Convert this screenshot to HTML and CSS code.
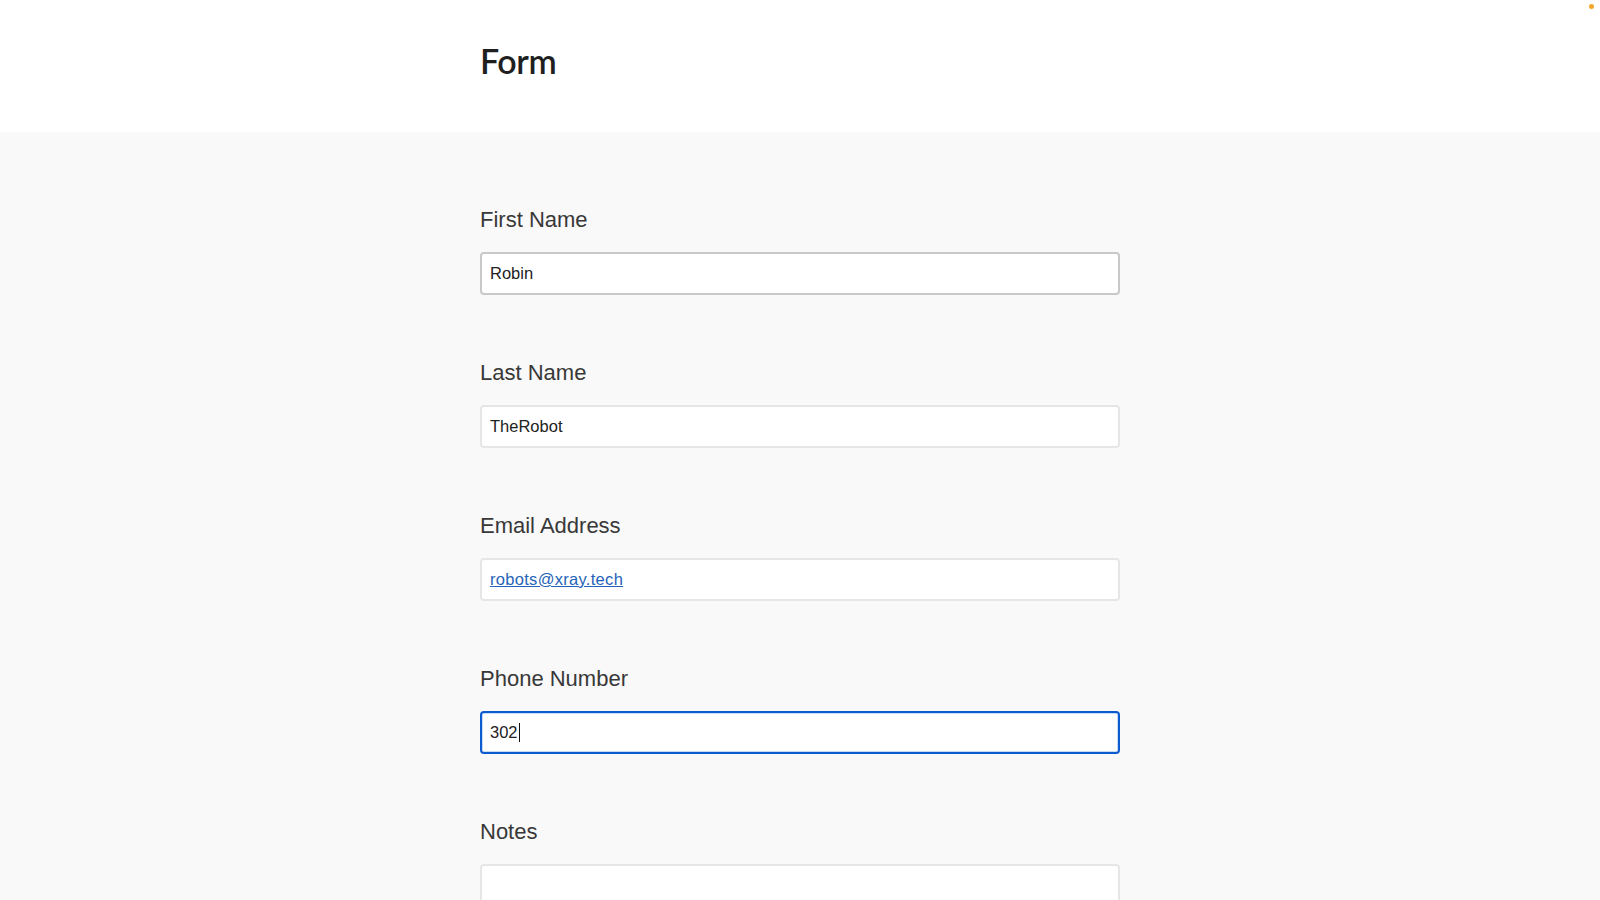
FILE: index.html
```html
<!DOCTYPE html>
<html lang="en">
<head>
<meta charset="utf-8">
<title>Form</title>
<link rel="stylesheet" href="styles.css">
</head>
<body>
<span class="status-dot"></span>
<header class="page-header">
  <div class="container">
    <h1 class="title">Form</h1>
  </div>
</header>
<main class="page-body">
  <div class="container">
    <div class="field">
      <label class="label">First Name</label>
      <div class="input input-hover">Robin</div>
    </div>
    <div class="field">
      <label class="label">Last Name</label>
      <div class="input">TheRobot</div>
    </div>
    <div class="field">
      <label class="label">Email Address</label>
      <div class="input"><a class="link" href="#">robots@xray.tech</a></div>
    </div>
    <div class="field">
      <label class="label">Phone Number</label>
      <div class="input input-focus">302<span class="caret"></span></div>
    </div>
    <div class="field">
      <label class="label">Notes</label>
      <div class="input textarea"></div>
    </div>
  </div>
</main>
</body>
</html>
```
FILE: styles.css
```css
html, body {
  margin: 0;
  padding: 0;
}
body {
  font-family: "Liberation Sans", Arial, sans-serif;
  color: #222;
  background: #f9f9f9;
  height: 900px;
  overflow: hidden;
}
.status-dot {
  position: absolute;
  top: 4px;
  right: 6px;
  width: 5px;
  height: 5px;
  border-radius: 50%;
  background: #f4a62a;
}
.container {
  width: 640px;
  margin: 0 auto;
}
.page-header {
  background: #fff;
  height: 132px;
  display: flex;
  align-items: flex-start;
}
.title {
  margin: 0;
  padding-top: 40px;
  font-family: Lato, "Liberation Sans", sans-serif;
  font-weight: 600;
  font-size: 34px;
  line-height: 42px;
  color: #1f1f1f;
  letter-spacing: -0.4px;
}
.page-body {
  background: #f9f9f9;
  padding-top: 75px;
}
.field {
  display: flex;
  flex-direction: column;
  gap: 19px;
  margin-bottom: 65px;
}
.label {
  font-size: 22px;
  line-height: 26px;
  color: #383838;
}
.input {
  box-sizing: border-box;
  height: 43px;
  background: #fff;
  border: 2px solid #e6e6e6;
  border-radius: 4px;
  padding: 0 8px;
  display: flex;
  align-items: center;
  font-size: 16.5px;
  color: #222;
}
.input-hover {
  border-color: #c9c9c9;
}
.input-focus {
  border-color: #0c5ccf;
  box-shadow: inset 0 0 0 1px #c7daf6;
}
.caret {
  display: inline-block;
  width: 1px;
  height: 19px;
  background: #111;
  margin-left: 1px;
}
.link {
  color: #2563b8;
  text-decoration: underline;
  letter-spacing: 0.3px;
}
.textarea {
  height: 120px;
}
```
